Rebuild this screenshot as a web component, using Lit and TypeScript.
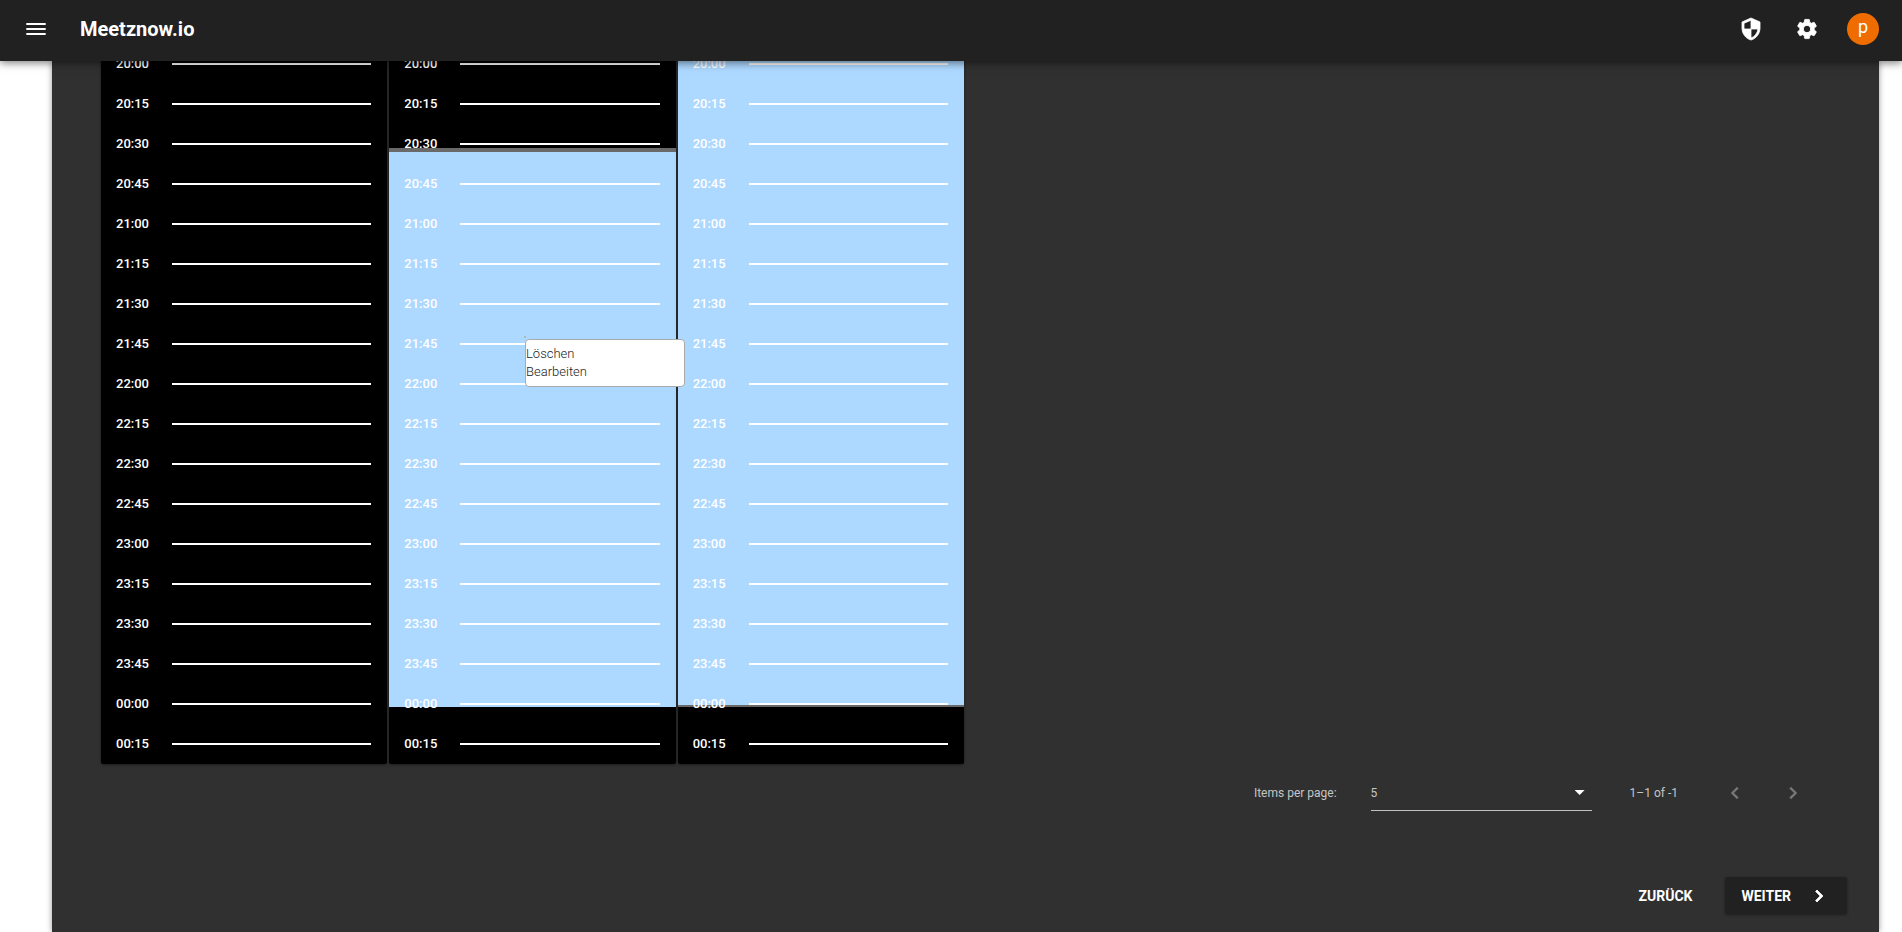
import { LitElement, html, css, svg } from "lit";
import { customElement, property } from "lit/decorators.js";

const SLOTS = [
  "20:00", "20:15", "20:30", "20:45", "21:00", "21:15", "21:30", "21:45", "22:00",
  "22:15", "22:30", "22:45", "23:00", "23:15", "23:30", "23:45", "00:00", "00:15",
];

interface Booking {
  start: number;
  length: number;
  edge: string;
}

const DAYS: (Booking | null)[] = [
  null,
  { start: 104, length: 559, edge: "start" },
  { start: 0, length: 663, edge: "end" },
];

const icon = (d: string, stroke = 0.8) => html`<svg viewBox="0 0 24 24" width="24" height="24" aria-hidden="true">
    ${svg`<path fill="currentColor" stroke="currentColor" stroke-width=${stroke} d=${d}></path>`}
  </svg>`;

const MENU = "M2.3 18h19.4v-2H2.3v2zm0-5h19.4v-2H2.3v2zm0-7v2h19.4V6H2.3z";
const SHIELD =
  "M12 1L3 5v6c0 5.55 3.84 10.74 9 12 5.16-1.26 9-6.45 9-12V5l-9-4zm0 10.99h7c-.53 4.12-3.28 7.79-7 8.94V12H5V6.3l7-3.11v8.8z";
const GEAR =
  "M19.14 12.94c.04-.3.06-.61.06-.94 0-.32-.02-.64-.07-.94l2.03-1.58c.18-.14.23-.41.12-.61l-1.92-3.32c-.12-.22-.37-.29-.59-.22l-2.39.96c-.5-.38-1.03-.7-1.62-.94l-.36-2.54c-.04-.24-.24-.41-.48-.41h-3.84c-.24 0-.43.17-.47.41l-.36 2.54c-.59.24-1.13.57-1.62.94l-2.39-.96c-.22-.08-.47 0-.59.22L2.74 8.87c-.12.21-.08.47.12.61l2.03 1.58c-.05.3-.09.63-.09.94s.02.64.07.94l-2.03 1.58c-.18.14-.23.41-.12.61l1.92 3.32c.12.22.37.29.59.22l2.39-.96c.5.38 1.03.7 1.62.94l.36 2.54c.05.24.24.41.48.41h3.84c.24 0 .44-.17.47-.41l.36-2.54c.59-.24 1.13-.56 1.62-.94l2.39.96c.22.08.47 0 .59-.22l1.92-3.32c.12-.22.07-.47-.12-.61l-2.01-1.58zM12 15.6c-1.98 0-3.6-1.62-3.6-3.6s1.62-3.6 3.6-3.6 3.6 1.62 3.6 3.6-1.62 3.6-3.6 3.6z";
const LEFT = "M15.41 7.41L14 6l-6 6 6 6 1.41-1.41L10.83 12z";
const RIGHT = "M10 6L8.59 7.41 13.17 12l-4.58 4.59L10 18l6-6z";

@customElement("day-column")
export class DayColumn extends LitElement {
  @property({ attribute: false }) booking: Booking | null = null;

  static styles = css`
    :host {
      display: block;
      position: relative;
      background: #000;
      border-radius: 2px;
      overflow: hidden;
      box-shadow: 0 1px 3px rgba(0, 0, 0, 0.4);
    }
    .booking {
      position: absolute;
      left: 0;
      right: 0;
      box-sizing: border-box;
      background: #add8ff;
    }
    .booking.start {
      border-top: 4px solid #696969;
    }
    .booking.end {
      border-bottom: 2px solid #696969;
    }
    .slots {
      position: relative;
      margin: 0;
      padding: 0;
      list-style: none;
    }
    .slot {
      display: flex;
      align-items: center;
      height: 40px;
      padding: 0 16px 0 15px;
    }
    .time {
      flex: none;
      width: 56px;
      font-size: 13px;
      line-height: 20px;
      font-weight: 500;
    }
    .rule {
      flex: 1;
      height: 2px;
      background: #fff;
    }
  `;

  render() {
    const b = this.booking;
    return html`
      ${b
        ? html`<div class="booking ${b.edge}" style="top:${b.start}px;height:${b.length}px"></div>`
        : null}
      <ul class="slots">
        ${SLOTS.map((t) => html`<li class="slot"><span class="time">${t}</span><span class="rule"></span></li>`)}
      </ul>
    `;
  }
}

@customElement("app-root")
export class AppRoot extends LitElement {
  static styles = css`
    :host {
      display: flex;
      flex-direction: column;
      height: 100vh;
      overflow: hidden;
      background: #fff;
      color: #fff;
      font-family: Roboto, "Liberation Sans", sans-serif;
    }
    button {
      display: flex;
      align-items: center;
      justify-content: center;
      margin: 0;
      padding: 0;
      border: 0;
      background: none;
      color: inherit;
      font: inherit;
      cursor: pointer;
    }
    svg {
      display: block;
    }
    .bar {
      position: relative;
      z-index: 2;
      flex: none;
      display: flex;
      align-items: center;
      height: 61px;
      box-sizing: border-box;
      padding: 0 23px 4px 16px;
      background: #212121;
      box-shadow: 0 2px 8px rgba(0, 0, 0, 0.5);
    }
    .icon {
      width: 40px;
      height: 40px;
    }
    .title {
      flex: 1;
      margin: 0 0 0 24px;
      font-size: 20px;
      line-height: 28px;
      font-weight: 700;
    }
    .actions {
      display: flex;
      align-items: center;
      gap: 16px;
    }
    .avatar {
      width: 32px;
      height: 32px;
      margin-left: 4px;
      padding-bottom: 3px;
      border-radius: 50%;
      background: #ef6c00;
      font-size: 18px;
      line-height: 24px;
    }
    .sheet {
      flex: 1;
      min-height: 0;
      display: flex;
      flex-direction: column;
      justify-content: flex-end;
      margin: 0 23px 0 52px;
      padding: 0 50px 18px 49px;
      background: #303030;
      box-shadow: 0 0 6px rgba(0, 0, 0, 0.4);
    }
    .days {
      flex: none;
      position: relative;
      display: grid;
      grid-template-columns: repeat(6, 1fr);
      gap: 2px;
    }
    .menu {
      position: absolute;
      z-index: 1;
      left: 424px;
      top: 295px;
      width: 160px;
      box-sizing: border-box;
      margin: 0;
      padding: 5px 0;
      border: 1px solid #aaa;
      border-radius: 4px;
      background: #fff;
      list-style: none;
    }
    .menu::before {
      content: "";
      position: absolute;
      left: -2px;
      top: -4px;
      width: 2px;
      height: 2px;
      background: #b5b5b5;
    }
    .menu button {
      font-size: 13px;
      line-height: 18px;
      font-weight: 300;
      color: #222;
    }
    .pager {
      flex: none;
      display: flex;
      align-items: center;
      justify-content: flex-end;
      height: 58px;
      padding-right: 7px;
      font-size: 12px;
      line-height: 16px;
      color: #c5c5c5;
    }
    .size {
      position: relative;
      display: flex;
      align-items: center;
      margin: 0 38px 0 34px;
      border-bottom: 1px solid #c1c1c1;
    }
    select {
      appearance: none;
      width: 221px;
      height: 34px;
      margin: 0;
      padding: 0;
      border: 0;
      background: none;
      color: inherit;
      font: inherit;
    }
    .arrow {
      position: absolute;
      right: 7px;
      width: 10px;
      height: 5px;
      background: #fff;
      clip-path: polygon(0 0, 100% 0, 50% 100%);
      pointer-events: none;
    }
    .range {
      margin-right: 28px;
    }
    .page {
      width: 58px;
      height: 40px;
      color: #777;
    }
    .steps {
      flex: none;
      display: flex;
      justify-content: flex-end;
      margin: 55px -18px 0 0;
      font-size: 14px;
      line-height: 36px;
      font-weight: 700;
    }
    .back {
      padding: 0 16px;
      margin-right: 17px;
    }
    .next {
      height: 37px;
      padding: 0 16px;
      gap: 16px;
      border-radius: 2px;
      background: #212121;
      box-shadow: 0 1px 3px rgba(0, 0, 0, 0.4);
    }
  `;

  render() {
    return html`
      <header class="bar">
        <button class="icon" aria-label="Menü">${icon(MENU, 0)}</button>
        <h1 class="title">Meetznow.io</h1>
        <div class="actions">
          <button class="icon" aria-label="Sicherheit">${icon(SHIELD)}</button>
          <button class="icon" aria-label="Einstellungen">${icon(GEAR)}</button>
          <button class="avatar">p</button>
        </div>
      </header>
      <main class="sheet">
        <section class="days">
          ${DAYS.map((d) => html`<day-column .booking=${d}></day-column>`)}
          <ul class="menu">
            <li><button>Löschen</button></li>
            <li><button>Bearbeiten</button></li>
          </ul>
        </section>
        <div class="pager">
          <label for="size">Items per page:</label>
          <div class="size">
            <select id="size">
              <option>5</option>
            </select>
            <span class="arrow"></span>
          </div>
          <span class="range">1–1 of -1</span>
          <button class="page" disabled aria-label="Zurückblättern">${icon(LEFT, 0.4)}</button>
          <button class="page" disabled aria-label="Vorblättern">${icon(RIGHT, 0.4)}</button>
        </div>
        <div class="steps">
          <button class="back">ZURÜCK</button>
          <button class="next">WEITER ${icon(RIGHT)}</button>
        </div>
      </main>
    `;
  }
}
